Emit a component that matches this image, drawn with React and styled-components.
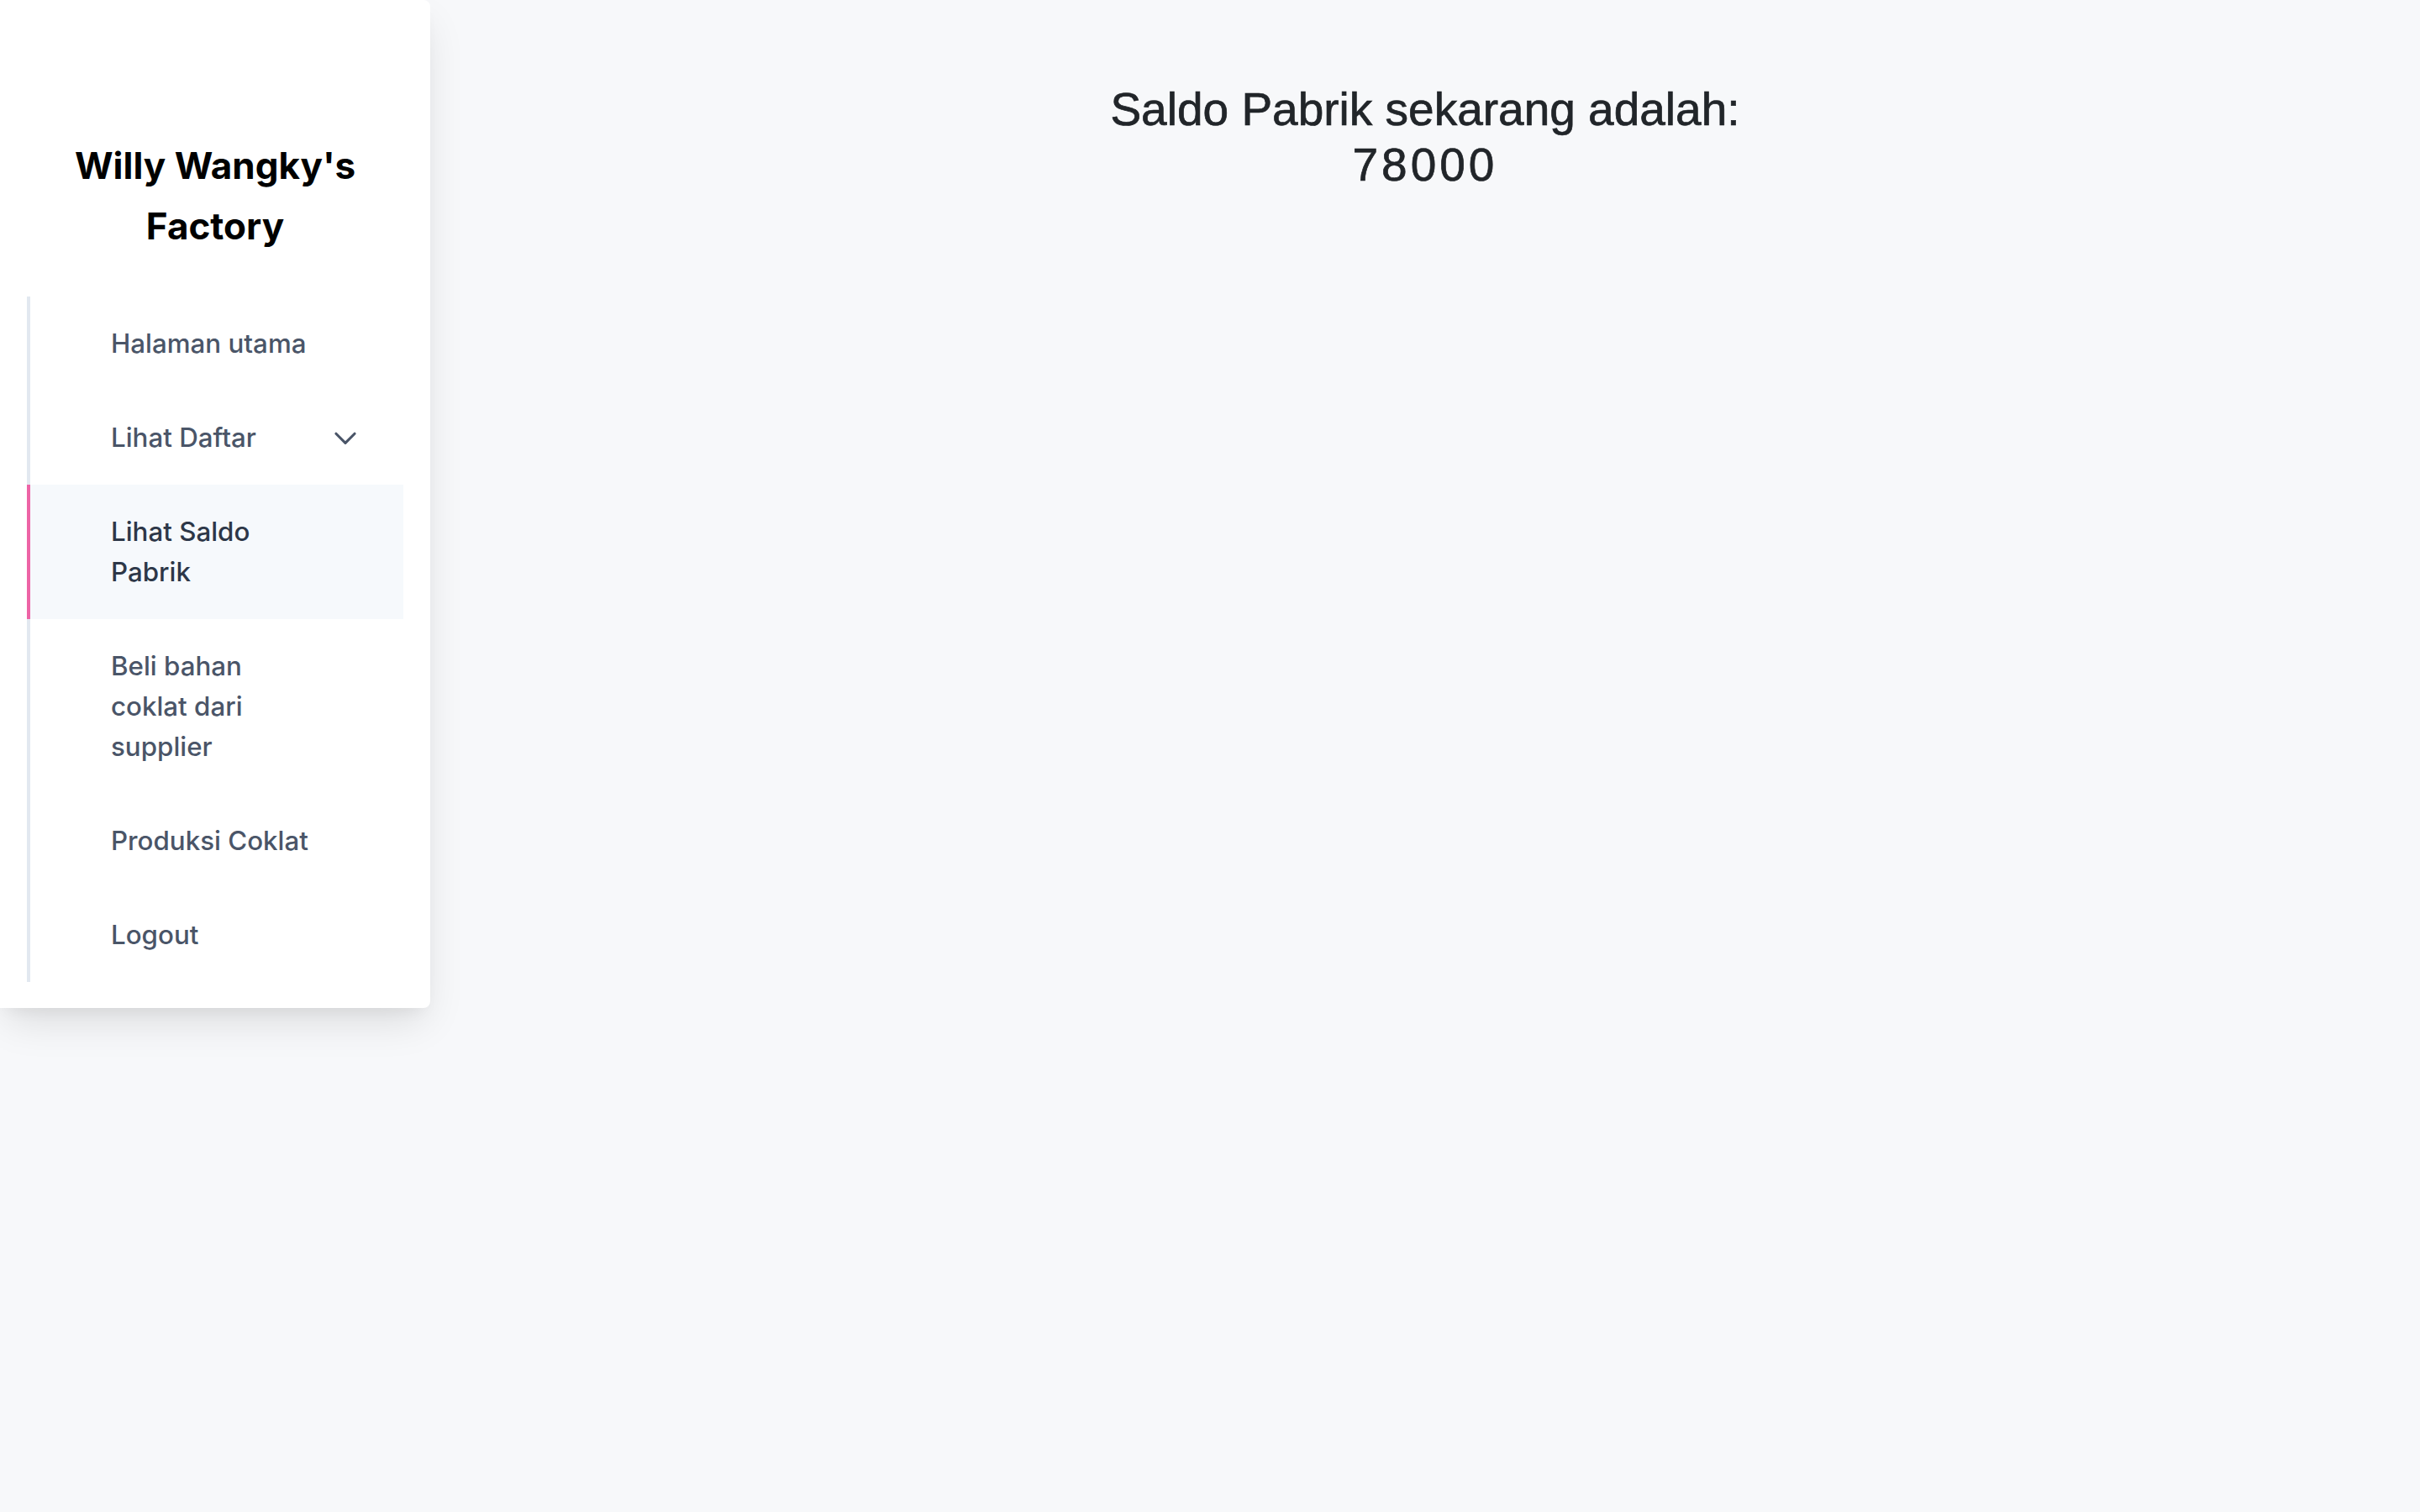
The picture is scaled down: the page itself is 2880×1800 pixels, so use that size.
import React from 'react';
import styled, { createGlobalStyle } from 'styled-components';

const GlobalStyle = createGlobalStyle`
  html, body {
    margin: 0;
    padding: 0;
    background: #f7f8fa;
    font-family: Inter, "Noto Sans", sans-serif;
  }
`;

const Layout = styled.div`
  display: flex;
  align-items: flex-start;
  min-height: 100vh;
`;

const Sidebar = styled.aside`
  width: 512px;
  flex: 0 0 512px;
  box-sizing: border-box;
  background: #ffffff;
  border-radius: 0 8px 8px 0;
  padding: 0 32px 31px 32px;
  box-shadow: 0 22px 46px -8px rgba(0, 0, 0, 0.12), 0 10px 18px -8px rgba(0, 0, 0, 0.06);
`;

const Brand = styled.h1`
  margin: 161px 0 48px;
  text-align: center;
  font-size: 44px;
  line-height: 72px;
  font-weight: 700;
  color: #000000;
`;

const Menu = styled.nav`
  display: flex;
  flex-direction: column;
  border-left: 4px solid #e2e8f0;
`;

const Item = styled.a`
  display: flex;
  align-items: center;
  margin-left: -4px;
  padding: 32px 50px 32px 96px;
  border-left: 4px solid ${p => (p.$active ? '#ed64a6' : 'transparent')};
  background: ${p => (p.$active ? '#f6f9fc' : 'transparent')};
  color: ${p => (p.$active ? '#2d3748' : '#4a5568')};
  font-size: 31.3px;
  line-height: 48px;
  font-weight: 500;
  text-decoration: none;
  cursor: pointer;
`;

const Label = styled.span`
  width: 240px;
`;

const Chevron = styled.svg`
  margin-left: auto;
  width: 38px;
  height: 38px;
  color: #4a5568;
`;

const Main = styled.main`
  flex: 1;
  padding-top: 97px;
  text-align: center;
`;

const Balance = styled.h2`
  margin: 0;
  font-family: "Liberation Sans", Arial, sans-serif;
  font-size: 55px;
  line-height: 66px;
  font-weight: 400;
  color: #212529;
  -webkit-text-stroke: 0.7px #212529;
`;

const Amount = styled.span`
  letter-spacing: 4px;
`;

const menu = [
  { label: 'Halaman utama' },
  { label: 'Lihat Daftar', dropdown: true },
  { label: 'Lihat Saldo Pabrik', active: true },
  { label: 'Beli bahan coklat dari supplier' },
  { label: 'Produksi Coklat' },
  { label: 'Logout' },
];

export default function App() {
  const saldo = 78000;

  return (
    <>
      <GlobalStyle />
      <Layout>
        <Sidebar>
          <Brand>Willy Wangky's Factory</Brand>
          <Menu>
            {menu.map(m => (
              <Item key={m.label} $active={m.active}>
                <Label>{m.label}</Label>
                {m.dropdown && (
                  <Chevron viewBox="0 0 24 24" fill="none" stroke="currentColor" strokeWidth="2" strokeLinecap="round" strokeLinejoin="round">
                    <path d="M19 9l-7 7-7-7" />
                  </Chevron>
                )}
              </Item>
            ))}
          </Menu>
        </Sidebar>
        <Main>
          <Balance>
            Saldo Pabrik sekarang adalah:
            <br />
            <Amount>{saldo}</Amount>
          </Balance>
        </Main>
      </Layout>
    </>
  );
}
